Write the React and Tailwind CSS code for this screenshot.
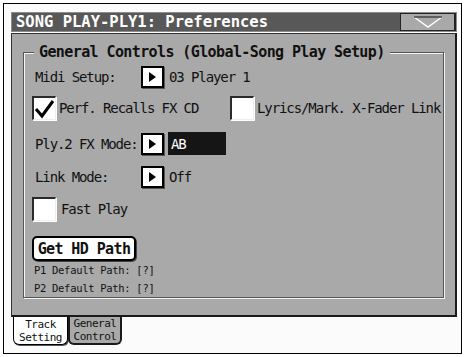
import React from "react"

const mono = "font-['DejaVu_Sans_Mono','Liberation_Mono',monospace]"

function ArrowBtn() {
  return (
    <div className="w-[23px] h-[22px] border-2 border-black bg-white flex items-center justify-center shadow-[1px_1px_0_#555]">
      <svg width="7" height="10" viewBox="0 0 7 10">
        <polygon points="0,0 7,5 0,10" fill="#000" />
      </svg>
    </div>
  )
}

function CheckBox({ checked }) {
  return (
    <div className="w-[24px] h-[24px] bg-white border-t-2 border-l-2 border-[#2a2a2a] border-r border-b border-r-[#eee] border-b-[#eee] shadow-[1px_1px_0_#fff]">
      {checked && (
        <svg width="22" height="22" viewBox="0 0 22 22">
          <path d="M2 11 L8 18 L19 3" fill="none" stroke="#000" strokeWidth="3" />
        </svg>
      )}
    </div>
  )
}

export default function App() {
  return (
    <div className="w-[464px] h-[357px] bg-white p-[3px]">
      <div className={`w-[459px] h-[351px] border border-black bg-[#fbfbfb] pt-[8px] pl-[7px] ${mono} text-[#111]`}>
        {/* title bar */}
        <div className="w-[446px] h-[20px] bg-[#585858] border border-[#8c8c8c] flex items-center justify-between">
          <span className="text-white font-bold text-[15.5px] leading-[18px] pl-[4px]">SONG PLAY-PLY1: Preferences</span>
          <div className="w-[56px] h-[18px] bg-[#a9a9a9] border border-[#222] border-r-2 flex items-center justify-center">
            <svg width="30" height="12" viewBox="0 0 30 12">
              <polyline points="1,1 15,11 29,1" fill="none" stroke="#fff" strokeWidth="1.5" />
              <line x1="1" y1="1" x2="29" y2="1" stroke="#444" strokeWidth="1.5" />
            </svg>
          </div>
        </div>
        <div className="h-[1px] w-[446px] bg-white" />

        {/* main panel */}
        <div className="w-[446px] h-[284px] bg-[#a9a9a9] border-l border-t border-[#333] border-r-2 border-b-2 border-r-[#1a1a1a] border-b-[#1a1a1a] pt-[18px] pl-[11px]">
          <div className="relative w-[421px] h-[246px] border border-[#555] shadow-[1px_1px_0_#f4f4f4,inset_1px_1px_0_#f4f4f4] pt-[13px] pl-[8px] text-[14px] tracking-[-1.1px] leading-[16px]">
            <span className="absolute left-[10px] top-[-10px] h-[18px] px-[5px] bg-[#a9a9a9] font-bold text-[15px] tracking-[-0.6px] leading-[18px] text-[#111]">
              General Controls (Global-Song Play Setup)
            </span>

            <div className="flex items-center h-[22px]">
              <span className="w-[106px] ml-[3px]">Midi Setup:</span>
              <ArrowBtn />
              <span className="ml-[5px]">03 Player 1</span>
            </div>

            <div className="flex items-center h-[24px] mt-[8px]">
              <div className="w-[198px] flex items-center">
                <CheckBox checked />
                <span className="ml-[3px]">Perf. Recalls FX CD</span>
              </div>
              <CheckBox />
              <span className="ml-[3px]">Lyrics/Mark. X-Fader Link</span>
            </div>

            <div className="flex items-center h-[23px] mt-[12px]">
              <span className="w-[106px] ml-[3px]">Ply.2 FX Mode:</span>
              <ArrowBtn />
              <div className="ml-[4px] w-[58px] h-[23px] bg-[#151515] text-white pl-[3px] flex items-center">AB</div>
            </div>

            <div className="flex items-center h-[22px] mt-[11px]">
              <span className="w-[106px] ml-[3px]">Link Mode:</span>
              <ArrowBtn />
              <span className="ml-[5px]">Off</span>
            </div>

            <div className="flex items-center h-[24px] mt-[9px]">
              <CheckBox />
              <span className="ml-[5px]">Fast Play</span>
            </div>

            <div className="mt-[15px] w-[104px] h-[25px] bg-white border-2 border-black rounded-[5px] shadow-[1px_1px_0_#444] flex items-center justify-center font-bold text-[15px] tracking-[-0.6px]">
              Get HD Path
            </div>

            <div className="mt-[2px] h-[14px] ml-[2px] text-[10.5px] tracking-[-0.3px] leading-[14px]">P1 Default Path: [?]</div>
            <div className="mt-[4px] h-[14px] ml-[2px] text-[10.5px] tracking-[-0.3px] leading-[14px]">P2 Default Path: [?]</div>
          </div>
        </div>

        {/* tabs */}
        <div className="flex ml-[2px]">
          <div className="w-[55px] h-[28px] bg-white border border-t-0 border-black rounded-b-[6px] shadow-[1px_1px_0_#555] flex flex-col items-center justify-center text-[11px] tracking-[-0.5px] leading-[13px]">
            <span>Track</span>
            <span>Setting</span>
          </div>
          <div className="w-[54px] h-[28px] bg-[#a9a9a9] border-2 border-t-0 border-[#1a1a1a] rounded-b-[6px] flex flex-col items-center justify-center text-[11px] tracking-[-0.5px] leading-[13px]">
            <span>General</span>
            <span>Control</span>
          </div>
        </div>
      </div>
    </div>
  )
}
